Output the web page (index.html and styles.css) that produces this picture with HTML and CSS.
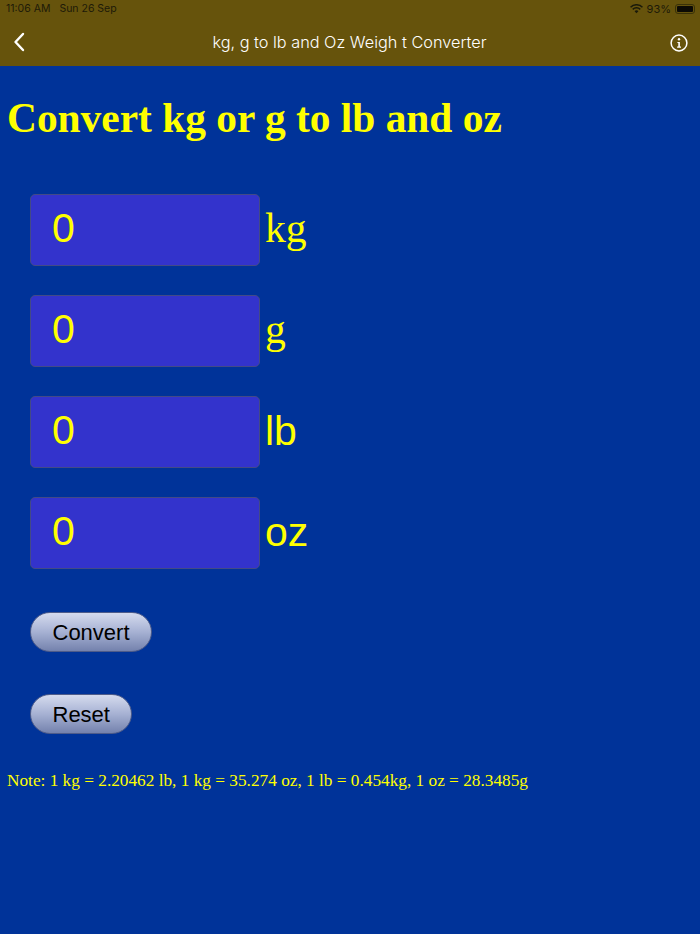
FILE: index.html
```html
<!DOCTYPE html>
<html lang="en">
<head>
<meta charset="utf-8">
<title>kg, g to lb and Oz Weight Converter</title>
<link rel="stylesheet" href="styles.css">
</head>
<body>
<header class="topbar">
  <div class="status">
    <div class="status-left"><span>11:06 AM</span><span>Sun 26 Sep</span></div>
    <div class="status-right">
      <svg class="wifi" viewBox="0 0 14 10" width="13" height="10"><path d="M7 9.6 4.9 7.4a3 3 0 0 1 4.2 0Z" fill="#1a1a0a"/><path d="M3.5 6 2.4 4.8a6.6 6.6 0 0 1 9.2 0L10.5 6a5 5 0 0 0-7 0Z" fill="#1a1a0a"/><path d="M1.2 3.7 0 2.5a9.9 9.9 0 0 1 14 0l-1.2 1.2a8.2 8.2 0 0 0-11.6 0Z" fill="#1a1a0a"/></svg>
      <span>93%</span>
      <span class="battery"><span class="battery-fill"></span></span>
    </div>
  </div>
  <nav class="navbar">
    <svg class="back" viewBox="0 0 12 20" width="12" height="20"><path d="M10 2 2.5 10 10 18" fill="none" stroke="#fff" stroke-width="2.4" stroke-linecap="round" stroke-linejoin="round"/></svg>
    <div class="nav-title">kg, g to lb and Oz Weigh t Converter</div>
    <svg class="info" viewBox="0 0 18 18" width="18" height="18"><circle cx="9" cy="9" r="7.9" fill="none" stroke="#fff" stroke-width="1.5"/><circle cx="9" cy="5.3" r="1.2" fill="#fff"/><path d="M7.4 7.9H9.9V12.6H11V13.8H7.1V12.6H8.3V9H7.4Z" fill="#fff"/></svg>
  </nav>
</header>
<main class="content">
  <h1>Convert kg or g to lb and oz</h1>
  <div class="rows">
    <div class="row"><div class="field">0</div><span class="unit serif">kg</span></div>
    <div class="row"><div class="field">0</div><span class="unit serif">g</span></div>
    <div class="row"><div class="field">0</div><span class="unit">lb</span></div>
    <div class="row"><div class="field">0</div><span class="unit">oz</span></div>
  </div>
  <div class="buttons">
    <button class="btn" type="button">Convert</button>
    <button class="btn" type="button">Reset</button>
  </div>
  <p class="note">Note: 1 kg = 2.20462 lb, 1 kg = 35.274 oz, 1 lb = 0.454kg, 1 oz = 28.3485g</p>
</main>
</body>
</html>
```
FILE: styles.css
```css
* { box-sizing: border-box; }
html, body { margin: 0; height: 100%; }
body { background: #003399; font-family: "Liberation Serif", serif; overflow: hidden; }
.topbar { background: #66530c; height: 66px; }
.status { height: 17px; display: flex; justify-content: space-between; align-items: center; padding: 0 5px 0 6px; font: 10.5px Inter, "Liberation Sans", sans-serif; color: #1d1a08; }
.status-left { display: flex; gap: 9px; }
.status-right { display: flex; align-items: center; gap: 4px; font-size: 11px; }
.battery { width: 20px; height: 10px; border: 1px solid #3a3208; border-radius: 3px; padding: 1px; display: block; }
.battery-fill { display: block; width: 100%; height: 100%; background: #0c0a04; border-radius: 1px; }
.navbar { height: 49px; display: flex; align-items: center; justify-content: space-between; padding: 0 12px 0 13px; position: relative; }
.back { display: block; margin-top: 1px; }
.info { display: block; margin-top: 2px; }
.nav-title { flex: 1; text-align: center; color: #fff; font: 300 16.3px Inter, "Liberation Sans", sans-serif; margin-left: 4px; margin-top: 1px; }
.content { padding: 0 0 0 7px; }
h1 { margin: 0; padding-top: 30px; font-size: 41.4px; line-height: 44px; color: #ffff00; font-weight: bold; }
.rows { margin: 54px 0 0 23px; display: flex; flex-direction: column; gap: 29px; }
.row { display: flex; align-items: center; gap: 5px; height: 72px; }
.field { width: 230px; height: 72px; background: #3333cc; border: 1.5px solid #434a86; border-radius: 5px; color: #ffff00; font: 41px/66px "Liberation Sans", sans-serif; padding-left: 21px; }
.unit { color: #ffff00; font: 41px/70px "Liberation Sans", sans-serif; margin-top: -2px; }
.unit.serif { font-family: "Liberation Serif", serif; font-size: 41.6px; margin-top: -4px; }
.buttons { margin: 43px 0 0 23px; display: flex; flex-direction: column; align-items: flex-start; gap: 42px; }
.btn { height: 40px; padding: 2px 21.5px 0; border-radius: 20px; border: 1.5px solid #4e5c8a; background: linear-gradient(#d5dbee, #a6b1d3 50%, #7482ad); font: 22px "Liberation Sans", sans-serif; color: #000; }
.note { margin: 36px 0 0; font-size: 17.27px; line-height: 22px; color: #ffff00; }
```
